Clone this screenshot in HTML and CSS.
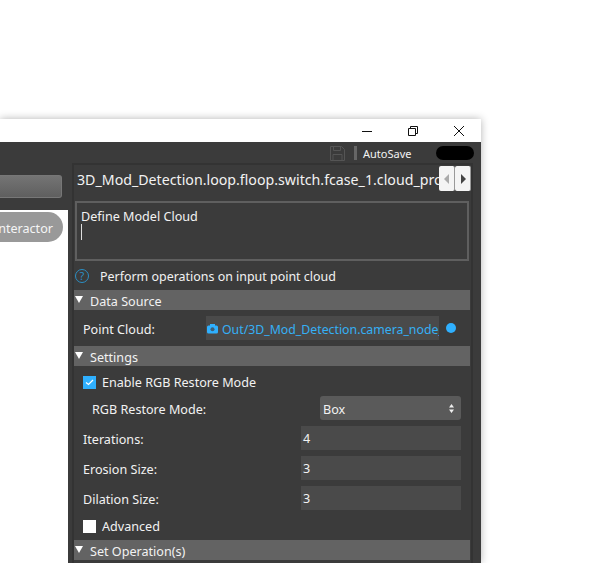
FILE: index.html
```html
<!DOCTYPE html>
<html lang="en">
<head>
<meta charset="utf-8">
<title>AutoSave</title>
<link rel="stylesheet" href="styles.css">
</head>
<body>
<div class="window">
  <header class="titlebar">
    <svg class="ctl" width="14" height="14" viewBox="0 0 14 14"><path d="M2 7.500h10" stroke="#111" fill="none"/></svg>
    <svg class="ctl" width="14" height="14" viewBox="0 0 14 14"><path d="M2.500 4.500h7v7h-7zM4.500 4.500v-2h7v7h-2" stroke="#111" fill="none"/></svg>
    <svg class="ctl" width="14" height="14" viewBox="0 0 14 14"><path d="M2 2l10 10M12 2L2 12" stroke="#111" fill="none"/></svg>
  </header>
  <div class="toolbar">
    <svg class="save" width="15" height="15" viewBox="0 0 15 15"><path d="M.5.500h11l3 3v11H.5zM3.500.500v4h7v-4M3 14.500v-6h9v6" stroke="#555" fill="none"/></svg>
    <span class="divider"></span>
    <span class="autosave">AutoSave</span>
    <span class="toggle"></span>
  </div>
  <div class="main">
    <aside class="left">
      <div class="left-btn"></div>
      <div class="canvas"><div class="pill">Interactor</div></div>
    </aside>
    <section class="panel">
      <div class="tabbar">
        <div class="tabtitle">3D_Mod_Detection.loop.floop.switch.fcase_1.cloud_process</div>
        <div class="tabbtns">
          <span class="tabbtn"><svg width="6" height="10" viewBox="0 0 6 10"><path d="M5 0v10L0 5z" fill="#aaa"/></svg></span>
          <span class="tabbtn"><svg width="6" height="10" viewBox="0 0 6 10"><path d="M1 0v10l5-5z" fill="#444"/></svg></span>
        </div>
      </div>
      <div class="notes">
        <div>Define Model Cloud</div>
        <span class="caret"></span>
      </div>
      <div class="help">
        <span class="qmark">?</span>
        <span class="help-text">Perform operations on input point cloud</span>
      </div>
      <div class="section"><span class="tri"></span>Data Source</div>
      <div class="row-source">
        <span class="label-source">Point Cloud:</span>
        <div class="source-field">
          <svg width="11" height="11" viewBox="0 0 11 11"><path d="M3 1h5v1.500h1.500q1.500 0 1.500 1.500v5q0 1.500-1.500 1.500h-8Q0 10.500 0 9V4q0-1.500 1.500-1.500H3z" fill="#2fb0ff"/><circle cx="5.500" cy="6.200" r="2" fill="#3d5f78"/></svg>
          <span class="source-text">Out/3D_Mod_Detection.camera_node_output</span>
        </div>
        <span class="dot"></span>
      </div>
      <div class="section"><span class="tri"></span>Settings</div>
      <label class="check first"><span class="box on"><svg width="9" height="7" viewBox="0 0 9 7"><path d="M1 3.500l2.500 2L8 1" stroke="#fff" stroke-width="1.300" fill="none"/></svg></span>Enable RGB Restore Mode</label>
      <div class="row-select">
        <span class="field-label">RGB Restore Mode:</span>
        <div class="select"><span class="field-label">Box</span><svg width="5" height="9" viewBox="0 0 5 9"><path d="M2.500 0L5 3.500H0zM2.500 9L0 5.500h5z" fill="#eee"/></svg></div>
      </div>
      <div class="row-input"><span class="field-label">Iterations:</span><div class="input">4</div></div>
      <div class="row-input"><span class="field-label">Erosion Size:</span><div class="input">3</div></div>
      <div class="row-input"><span class="field-label">Dilation Size:</span><div class="input">3</div></div>
      <label class="check adv"><span class="box"></span>Advanced</label>
      <div class="section last"><span class="tri"></span>Set Operation(s)</div>
    </section>
  </div>
</div>
</body>
</html>
```
FILE: styles.css
```css
html, body {
  margin: 0;
  height: 100%;
  background: #fff;
  overflow: hidden;
}
body {
  font-family: "Noto Sans", "Open Sans", sans-serif;
  font-size: 12.600px;
  color: #f2f2f2;
}
.window {
  position: absolute;
  left: 0;
  top: 119px;
  width: 481px;
  height: 444px;
  background: #3b3b3b;
  box-shadow: 0 0 8px rgba(0, 0, 0, .3);
  display: flex;
  flex-direction: column;
  overflow: hidden;
}
.titlebar {
  height: 23px;
  flex: none;
  background: #fff;
  display: flex;
  justify-content: flex-end;
  align-items: center;
  gap: 32px;
  padding-right: 15px;
}
.toolbar {
  height: 21px;
  box-sizing: border-box;
  padding-top: 1px;
  flex: none;
  display: flex;
  align-items: center;
}
.save { margin-left: 330px; }
.divider {
  width: 3px;
  height: 14px;
  margin-left: 9px;
  background: #666;
}
.autosave {
  margin-left: 6px;
  width: 73px;
  font-size: 11px;
}
.toggle {
  width: 38px;
  height: 14px;
  border-radius: 7px;
  background: #000;
}
.main {
  flex: 1;
  display: flex;
  min-height: 0;
}
.left {
  width: 68px;
  flex: none;
  display: flex;
  flex-direction: column;
  padding-top: 12px;
}
.left-btn {
  width: 62px;
  height: 23px;
  box-sizing: border-box;
  flex: none;
  border: 1px solid #777;
  border-left: 0;
  border-radius: 0 3px 3px 0;
  background: linear-gradient(#747474, #5f5f5f);
}
.canvas {
  flex: 1;
  margin-top: 12px;
  background: #fff;
  display: flex;
  justify-content: flex-end;
  align-items: flex-start;
  overflow: hidden;
  padding: 2px 5px 0 0;
}
.pill {
  flex: none;
  height: 30px;
  line-height: 34px;
  padding: 0 10px 0 20px;
  border-radius: 0 15px 15px 0;
  background: #999;
  color: #f5f5f5;
}
.panel {
  width: 401px;
  margin-left: 4px;
  flex: none;
  box-sizing: border-box;
  border-top: 2px solid #333;
  border-left: 2px solid #333;
  border-right: 2px solid #333;
  display: flex;
  flex-direction: column;
}
.tabbar {
  height: 36px;
  flex: none;
  display: flex;
  align-items: flex-start;
}
.tabtitle {
  width: 365px;
  padding-left: 3px;
  box-sizing: border-box;
  white-space: nowrap;
  overflow: hidden;
  font-size: 14.200px;
  line-height: 29px;
}
.tabbtns {
  display: flex;
  margin-top: 1px;
}
.tabbtn {
  width: 15px;
  height: 25px;
  background: #f4f4f4;
  border-right: 1px solid #999;
  display: flex;
  align-items: center;
  justify-content: center;
  border-radius: 2px;
}
.notes {
  margin-left: 1px;
  width: 394px;
  height: 60px;
  flex: none;
  box-sizing: border-box;
  border: 2px solid #5f5f5f;
  padding: 5px 4px 4px;
  line-height: 17px;
}
.caret {
  display: block;
  width: 1px;
  height: 16px;
  margin-top: -1px;
  background: #ddd;
}
.help {
  height: 29px;
  flex: none;
  display: flex;
  align-items: center;
  padding-left: 1px;
  gap: 11px;
}
.help-text {
  padding-top: 2px;
  font-size: 12.450px;
}
.qmark {
  width: 12px;
  height: 12px;
  border: 1px solid #2b8fc4;
  border-radius: 50%;
  color: #2b8fc4;
  font-size: 11px;
  line-height: 12px;
  text-align: center;
}
.section {
  width: 396px;
  height: 20px;
  box-sizing: border-box;
  padding-top: 2px;
  flex: none;
  background: #636363;
  display: flex;
  align-items: center;
}
.tri {
  width: 0;
  height: 0;
  margin: 0 7px 4px 1px;
  border-left: 4.500px solid transparent;
  border-right: 4.500px solid transparent;
  border-top: 7px solid #fff;
}
.row-source {
  height: 36px;
  flex: none;
  display: flex;
  align-items: center;
}
.label-source {
  width: 132px;
  padding: 2px 0 0 9px;
  box-sizing: border-box;
}
.source-field {
  width: 233px;
  height: 24px;
  background: #4a4a4a;
  display: flex;
  align-items: center;
  gap: 4px;
  overflow: hidden;
  white-space: nowrap;
  padding-left: 1px;
  box-sizing: border-box;
  color: #35b0f5;
}
.source-field svg { flex: none; }
.source-text {
  padding-top: 2px;
  font-size: 12.300px;
}
.dot {
  width: 10px;
  height: 10px;
  margin-left: 7px;
  border-radius: 50%;
  background: #2fb0ff;
}
.check {
  display: flex;
  align-items: center;
  gap: 6px;
  padding-left: 9px;
  height: 20px;
  flex: none;
}
.check.first { margin-top: 6px; }
.check.adv { margin-top: 6px; }
.box {
  width: 13px;
  height: 13px;
  background: #fff;
  display: flex;
  align-items: center;
  justify-content: center;
}
.box.on { background: #2fb0ff; }
.field-label { padding-top: 2px; }
.row-select {
  display: flex;
  align-items: center;
  justify-content: space-between;
  margin-top: 4px;
  height: 24px;
  flex: none;
  width: 387px;
  padding-left: 18px;
  box-sizing: border-box;
}
.select {
  width: 141px;
  height: 24px;
  box-sizing: border-box;
  padding: 0 7px 0 3px;
  border-radius: 3px;
  background: #5a5a5a;
  display: flex;
  align-items: center;
  justify-content: space-between;
}
.row-input {
  display: flex;
  align-items: center;
  justify-content: space-between;
  margin-top: 6px;
  height: 24px;
  flex: none;
  width: 387px;
  padding-left: 9px;
  box-sizing: border-box;
}
.input {
  width: 160px;
  height: 24px;
  line-height: 26px;
  box-sizing: border-box;
  padding-left: 2px;
  background: #4a4a4a;
}
.section.last { margin-top: 4px; }
```
